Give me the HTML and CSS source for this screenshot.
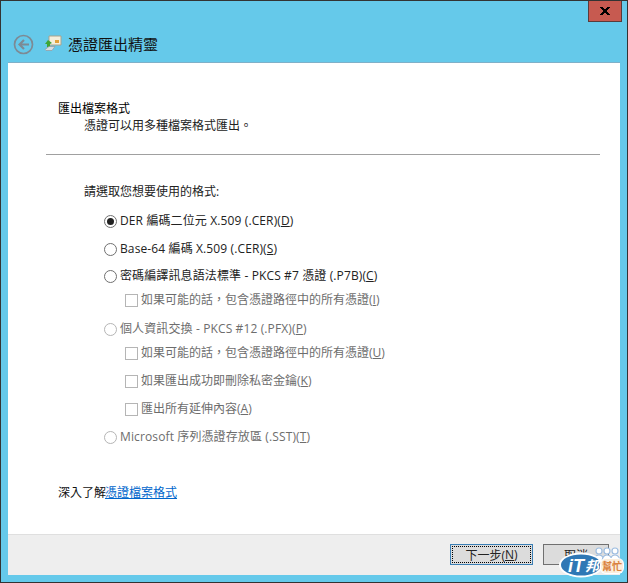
FILE: index.html
```html
<!DOCTYPE html>
<html lang="zh-TW">
<head>
<meta charset="utf-8">
<title>憑證匯出精靈</title>
<link rel="stylesheet" href="styles.css">
</head>
<body>
<div class="window">
  <button class="close" aria-label="關閉"><svg width="12" height="10" viewBox="0 0 12 10"><path d="M1 1h3v1h1v1h2V2h1V1h3v1h-1v1h-1v1H8v2h1v1h1v1h1v1H8V8H7V7H5v1H4v1H1V8h1V7h1V6h1V4H3V3H2V2H1z" fill="#000"/></svg></button>
  <header class="titlebar">
    <svg class="back" width="21" height="21" viewBox="0 0 21 21"><circle cx="10.500" cy="10.500" r="9" fill="none" stroke="#7d8a94" stroke-width="1.700"/><path d="M16 10.500H7M11 6 6.500 10.500 11 15" fill="none" stroke="#7d8a94" stroke-width="2.200"/></svg>
    <svg class="wizard" width="18" height="18" viewBox="0 0 18 18"><path d="M5 1h12v9H5z" fill="#f4efdc" stroke="#a9a38d"/><path d="M11 5h4v3h-4z" fill="#e2a23a"/><path d="M4 5 8 8 6 9v3H3V9H1z" fill="#3fa535"/><path d="M1 14.500 5 11.500h6l-3 4H2z" fill="#d7dde0" stroke="#8f9aa0" stroke-width=".7"/></svg>
    <h1 class="title">憑證匯出精靈</h1>
  </header>
  <main class="content">
    <section class="intro">
      <h2 class="heading">匯出檔案格式</h2>
      <p class="sub">憑證可以用多種檔案格式匯出。</p>
    </section>
    <hr class="rule">
    <section class="form">
      <p class="prompt">請選取您想要使用的格式:</p>
      <div class="opt radio-row r1"><span class="radio on"></span>DER 編碼二位元 X.509 (.CER)(<u>D</u>)</div>
      <div class="opt radio-row r2"><span class="radio"></span>Base-64 編碼 X.509 (.CER)(<u>S</u>)</div>
      <div class="opt radio-row r3"><span class="radio"></span>密碼編譯訊息語法標準 - PKCS #7 憑證 (.P7B)(<u>C</u>)</div>
      <div class="opt check-row c1 off"><span class="check"></span>如果可能的話，包含憑證路徑中的所有憑證(<u>I</u>)</div>
      <div class="opt radio-row r4 off"><span class="radio"></span>個人資訊交換 - PKCS #12 (.PFX)(<u>P</u>)</div>
      <div class="opt check-row c2 off"><span class="check"></span>如果可能的話，包含憑證路徑中的所有憑證(<u>U</u>)</div>
      <div class="opt check-row c3 off"><span class="check"></span>如果匯出成功即刪除私密金鑰(<u>K</u>)</div>
      <div class="opt check-row c3 off"><span class="check"></span>匯出所有延伸內容(<u>A</u>)</div>
      <div class="opt radio-row r5 off"><span class="radio"></span>Microsoft 序列憑證存放區 (.SST)(<u>T</u>)</div>
    </section>
    <p class="more">深入了解<a href="#" class="link">憑證檔案格式</a></p>
  </main>
  <footer class="footer">
    <button class="btn primary"><span class="focus">下一步(<u>N</u>)</span></button>
    <button class="btn cancel">取消</button>
  </footer>
  <div class="badge">
    <svg width="78" height="48" viewBox="0 0 78 48">
      <g fill="#fff" stroke="#9dbde0" stroke-width="1.200"><circle cx="50" cy="17" r="3"/><path d="M45 29c0-5 2-8 5-8s5 3 5 8z"/><circle cx="66" cy="17" r="3"/><path d="M61 29c0-5 2-8 5-8s5 3 5 8z"/><circle cx="58" cy="17" r="3"/><path d="M53 29c0-5 2-8 5-8s5 3 5 8z"/></g>
      <ellipse cx="32" cy="31" rx="22" ry="12.500" fill="#fff"/>
      <ellipse cx="32" cy="31" rx="20" ry="10.500" fill="#2f78b5"/>
      <rect x="51" y="24" width="24" height="16" rx="6" fill="#fff"/>
      <rect x="52" y="25" width="22" height="14" rx="5" fill="#fbeedd"/>
      <text x="19" y="38" class="badge-it">iT</text>
      <text x="36" y="37" class="badge-bang">邦</text>
      <text x="53" y="36" class="badge-help">幫忙</text>
    </svg>
  </div>
</div>
</body>
</html>
```
FILE: styles.css
```css
* { box-sizing: border-box; }
html, body { margin: 0; padding: 0; }
body {
  width: 628px;
  height: 583px;
  overflow: hidden;
  background: #fff;
  font-family: "Open Sans", "Noto Sans CJK TC", sans-serif;
  font-size: 12px;
  color: #000;
}
.window {
  position: relative;
  width: 628px;
  height: 583px;
  display: flex;
  flex-direction: column;
  background: #65c9ea;
  border: 1px solid #333;
  padding: 0 7px 7px;
}
.close {
  position: absolute;
  top: 0;
  right: 5px;
  width: 34px;
  height: 21px;
  padding: 0;
  display: flex;
  align-items: center;
  justify-content: center;
  background: #c75a50;
  border: 1px solid #5a3a3a;
  border-top: 0;
}
.titlebar {
  height: 62px;
  flex: none;
  display: flex;
  align-items: center;
  padding: 25px 0 0 5px;
  border-bottom: 1px solid #7fb0c8;
}
.back { margin-right: 10px; }
.wizard { margin-right: 6px; }
.title { margin: 0; font-size: 15px; font-weight: 400; line-height: 20px; color: #111; }
.content {
  flex: 1;
  background: #fff;
  padding: 38px 27px 0 38px;
  display: flex;
  flex-direction: column;
}
.heading { margin: 0 0 0 12px; font-size: 12px; font-weight: 400; line-height: 16px; }
.sub { margin: 1px 0 0 38px; line-height: 16px; color: #222; }
.rule { margin: 20px 0 0; height: 1px; border: 0; background: #a0a0a0; width: 554px; flex: none; }
.form { margin-top: 29px; }
.prompt { margin: 0 0 0 38px; line-height: 16px; color: #222; }
.opt { display: flex; align-items: center; line-height: 16px; color: #222; white-space: nowrap; }
.off { color: #6d6d6d; }
.radio-row { margin-left: 58px; letter-spacing: .12px; }
.check-row { margin-left: 79px; }
.r1 { margin-top: 13px; }
.r2 { margin-top: 12px; }
.r3 { margin-top: 11px; }
.c1 { margin-top: 8px; }
.r4 { margin-top: 13px; }
.c2 { margin-top: 8px; }
.c3 { margin-top: 12px; }
.r5 { margin-top: 12px; }
.radio {
  width: 13px; height: 13px; flex: none;
  margin-right: 3px;
  border: 1px solid #707070;
  border-radius: 50%;
  background: #fff;
  position: relative;
}
.off .radio { border-color: #b5b5b5; }
.radio.on::after {
  content: "";
  position: absolute;
  left: 2px; top: 2px;
  width: 7px; height: 7px;
  border-radius: 50%;
  background: #222;
}
.check {
  width: 13px; height: 13px; flex: none;
  margin-right: 3px;
  border: 1px solid #b5b5b5;
  background: #fff;
}
.more { margin: 40px 0 0 12px; line-height: 16px; color: #111; }
.link { color: #0066cc; margin-left: -1px; }
.footer {
  flex: none;
  height: 41px;
  display: flex;
  justify-content: flex-end;
  align-items: flex-start;
  gap: 10px;
  padding: 9px 11px 0 0;
  background: #eeeeee;
  border-top: 1px solid #dfdfdf;
}
.btn {
  width: 83px;
  height: 21px;
  padding: 0;
  font: inherit;
  color: #222;
  background: #dcdcdc;
  border: 1px solid #707070;
}
.btn.cancel { width: 66px; }
.btn.primary { border-color: #3b7fb5; padding: 1px; }
.focus {
  display: flex;
  width: 100%;
  height: 100%;
  align-items: center;
  justify-content: center;
  border: 1px dotted #000;
}
.badge { position: absolute; right: 0; bottom: 0; width: 78px; height: 48px; }
.badge svg { display: block; }
.badge-it { font: italic 700 18px "Liberation Sans", sans-serif; fill: #fff; }
.badge-bang { font: italic 700 14px "Noto Sans CJK TC", sans-serif; fill: #fff; }
.badge-help { font: 700 10px "Noto Sans CJK TC", sans-serif; fill: #d9803a; }
```
